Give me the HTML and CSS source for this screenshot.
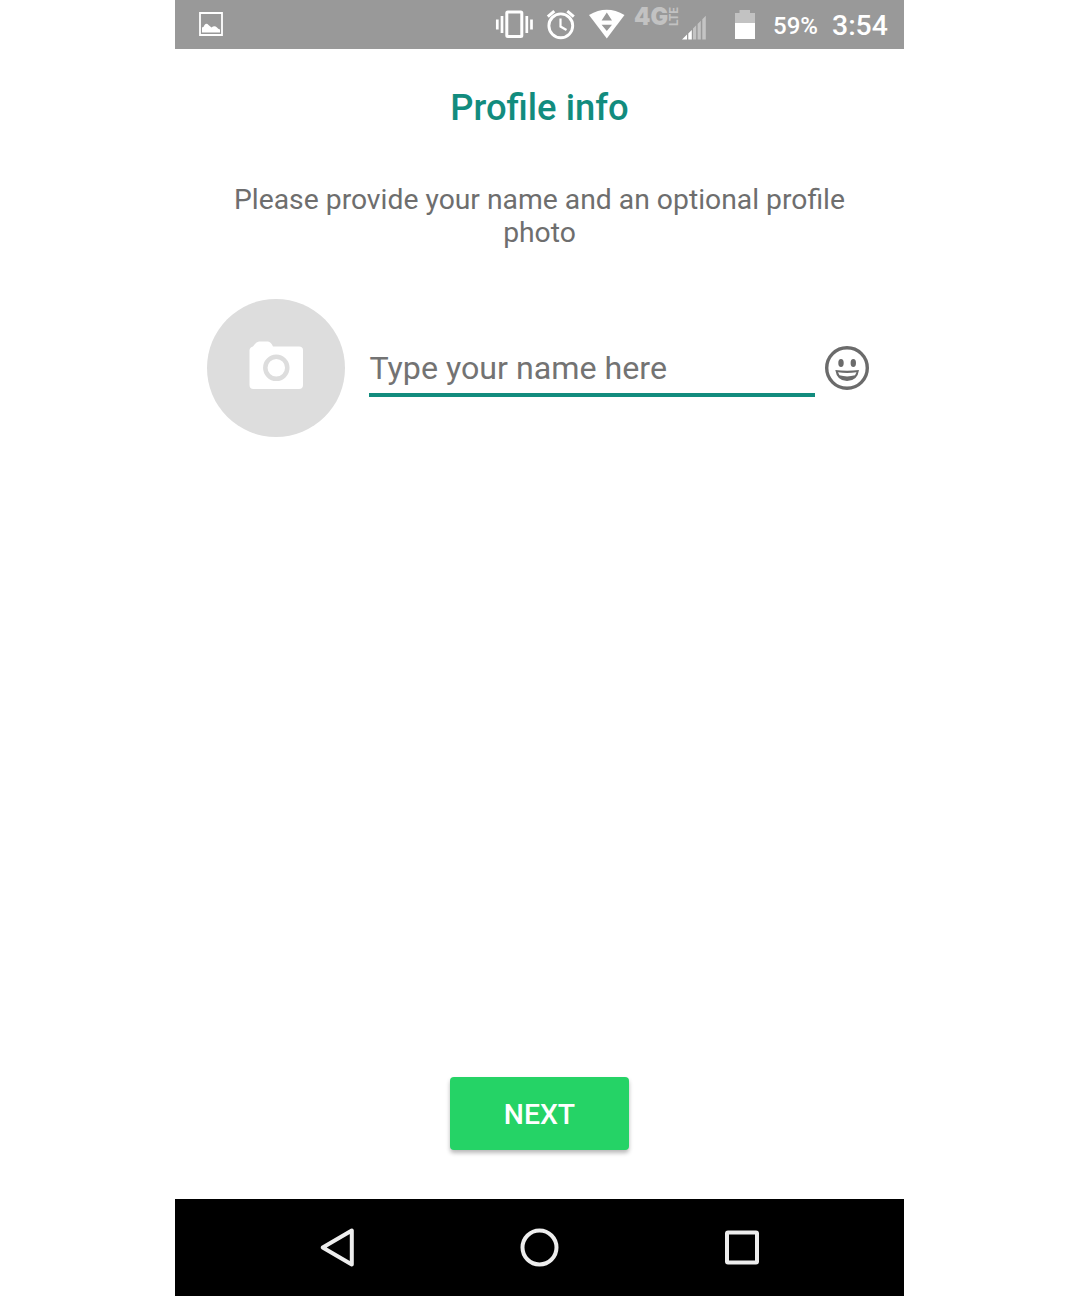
FILE: index.html
```html
<!DOCTYPE html>
<html lang="en">
<head>
<meta charset="utf-8">
<title>Profile info</title>
<link rel="stylesheet" href="styles.css">
</head>
<body>
<div class="phone">
  <header class="status">
    <svg class="picture" width="24" height="24" viewBox="0 0 24 24"><path d="M1 1H23V23H1Z" fill="none" stroke="#fff" stroke-width="1.800"/><path d="M3 20.500V15.500Q5 15 5.500 13Q7.500 10.500 9.500 13L12.500 15.500Q15.500 13 18 15.500Q19 17 21 17.500V20.500Z" fill="#fff"/></svg>
    <svg class="vibrate" width="38" height="30" viewBox="495 9 38 30"><rect x="506.800" y="12" width="15" height="24.500" rx="1" fill="none" stroke="#fff" stroke-width="3"/><path d="M502 16V33M497.300 19.500V29.500M526.800 16V33M531.500 19.500V29.500" stroke="#fff" stroke-width="2.700"/></svg>
    <svg class="alarm" width="30" height="32" viewBox="546 8 30 32"><circle cx="560.800" cy="25.800" r="11.900" fill="none" stroke="#fff" stroke-width="2.900"/><path d="M547.800 16.700L554.300 11.200M567.300 11.200L573.800 16.700" stroke="#fff" stroke-width="3"/><path d="M560.500 18.500V26.500L566.500 30" fill="none" stroke="#fff" stroke-width="2.200"/></svg>
    <svg class="wifi" width="36" height="30" viewBox="589 9 36 30"><path d="M589 15Q606.800 4.500 624.500 15L606.800 38.500Z" fill="#fff"/><path d="M606.800 12.500L612 20.500H601.600ZM601.600 24.800H612L606.800 31Z" fill="#999"/></svg>
    <svg class="network" width="74" height="42" viewBox="633 0 74 42">
      <text transform="translate(634 25.300) scale(1 1.080)" class="gen" textLength="34" lengthAdjust="spacingAndGlyphs">4G</text>
      <text transform="translate(678 26) rotate(-90)" class="lte" textLength="19" lengthAdjust="spacingAndGlyphs">LTE</text>
      <path d="M682 39.500L687 34.500V39.500ZM688.300 33.500L691.800 30V39.500H688.300Z" fill="#fff"/>
      <path d="M693 28.500L696.200 25.200V39.500H693ZM697.600 24L700.800 20.800V39.500H697.600ZM702.300 19.300L705.800 15.800V39.500H702.300Z" fill="#c4c4c4"/>
    </svg>
    <svg class="battery" width="20" height="30" viewBox="735 10 20 30"><path d="M735 23V13H739.500V10H750V13H755V23Z" fill="#c2c2c2"/><path d="M735 23H755V39H735Z" fill="#fff"/></svg>
    <span class="percent">59%</span>
    <span class="clock">3:54</span>
  </header>
  <main class="content">
    <h1 class="title">Profile info</h1>
    <p class="hint">Please provide your name and an optional profile photo</p>
    <div class="form">
      <div class="avatar">
        <svg width="54" height="48" viewBox="249 341 54 48"><path d="M249.500 350Q250 347 253 346.500Q256 342 259 341.500H268Q271 342 273 346.500H299Q303 346.500 303 350V385Q303 389 299 389H253.500Q249.500 389 249.500 385Z" fill="#fff"/><circle cx="276.300" cy="367.800" r="11" fill="none" stroke="#ddd" stroke-width="4.500"/></svg>
      </div>
      <div class="field">Type your name here</div>
      <svg class="smile" width="46" height="46" viewBox="824 345 46 46"><circle cx="847" cy="368" r="20.300" fill="none" stroke="#6b6b6b" stroke-width="3.400"/><ellipse cx="841" cy="363" rx="2.700" ry="4" fill="#6b6b6b"/><ellipse cx="853.300" cy="363" rx="2.700" ry="4" fill="#6b6b6b"/><path d="M835.300 370Q847 371.500 859 370Q857.500 381 847 381Q837 381 835.300 370Z" fill="#6b6b6b"/><path d="M838 372.300Q847 373.800 856.500 372.300L855 375.300Q847 377.500 839.500 375.300Z" fill="#fff"/></svg>
    </div>
    <button class="next">NEXT</button>
  </main>
  <nav class="nav">
    <svg width="40" height="42" viewBox="317 1227 40 42"><path d="M322.700 1247.500L351.800 1230.500V1264.500Z"/></svg>
    <svg width="42" height="42" viewBox="519 1227 42 42"><circle cx="539.500" cy="1247.500" r="17"/></svg>
    <svg width="40" height="42" viewBox="722 1227 40 42"><rect x="727" y="1232.500" width="30" height="30" rx="1"/></svg>
  </nav>
</div>
</body>
</html>
```
FILE: styles.css
```css
* { box-sizing: border-box; }
body { margin: 0; background: #fff; font-family: Roboto, sans-serif; }
svg { display: block; flex: none; }
.phone { width: 729px; height: 1296px; margin-left: 175px; display: flex; flex-direction: column; }
.status { height: 48.5px; flex: none; background: #999; display: flex; align-items: flex-start; color: #fff; font-weight: 500; white-space: nowrap; }
.picture { margin: 12px 0 0 24px; }
.vibrate { margin: 9px 0 0 272px; }
.alarm { margin: 8px 0 0 13px; }
.wifi { margin: 9px 0 0 13px; }
.network { margin: 0 0 0 8px; overflow: visible; }
.gen { font: 900 23px Inter, sans-serif; fill: #c2c2c2; }
.lte { font: 700 12px Roboto, sans-serif; fill: #c2c2c2; }
.battery { margin: 10px 0 0 28px; }
.percent { width: 45px; margin: 11px 0 0 18px; font-size: 24px; line-height: 30px; }
.clock { margin: 9px 0 0 14px; font-size: 28.4px; line-height: 34px; }
.content { flex: 1; display: flex; flex-direction: column; align-items: center; }
.title { margin: 37px 0 0; font-size: 36.4px; line-height: 44px; font-weight: 500; color: #128c7e; }
.hint { width: 640px; margin: 53px 0 0; font-size: 28.3px; line-height: 33px; text-align: center; color: #6e6e6e; }
.form { width: 663px; margin: 50px 2px 0 0; display: flex; align-items: center; }
.avatar { width: 138px; height: 138px; border-radius: 50%; background: #ddd; display: flex; align-items: center; justify-content: center; padding-bottom: 6px; }
.field { width: 446px; height: 58px; margin: 0 9px 0 24px; padding-left: 0.5px; border-bottom: 4px solid #128c7e; font-size: 32.2px; line-height: 58px; color: #737373; }
.next { width: 179px; height: 73px; margin-top: auto; margin-bottom: 48.5px; padding: 2px 0 0; border: 0; border-radius: 4px; background: #25d366; color: #fff; font: 500 28.35px Roboto, sans-serif; box-shadow: 0 3px 4px rgba(0,0,0,.28); }
.nav { height: 97.5px; flex: none; background: #000; padding: 1px 142px 0; display: flex; align-items: center; justify-content: space-between; }
.nav svg { fill: none; stroke: #eee; stroke-width: 4; stroke-linejoin: round; }
```
